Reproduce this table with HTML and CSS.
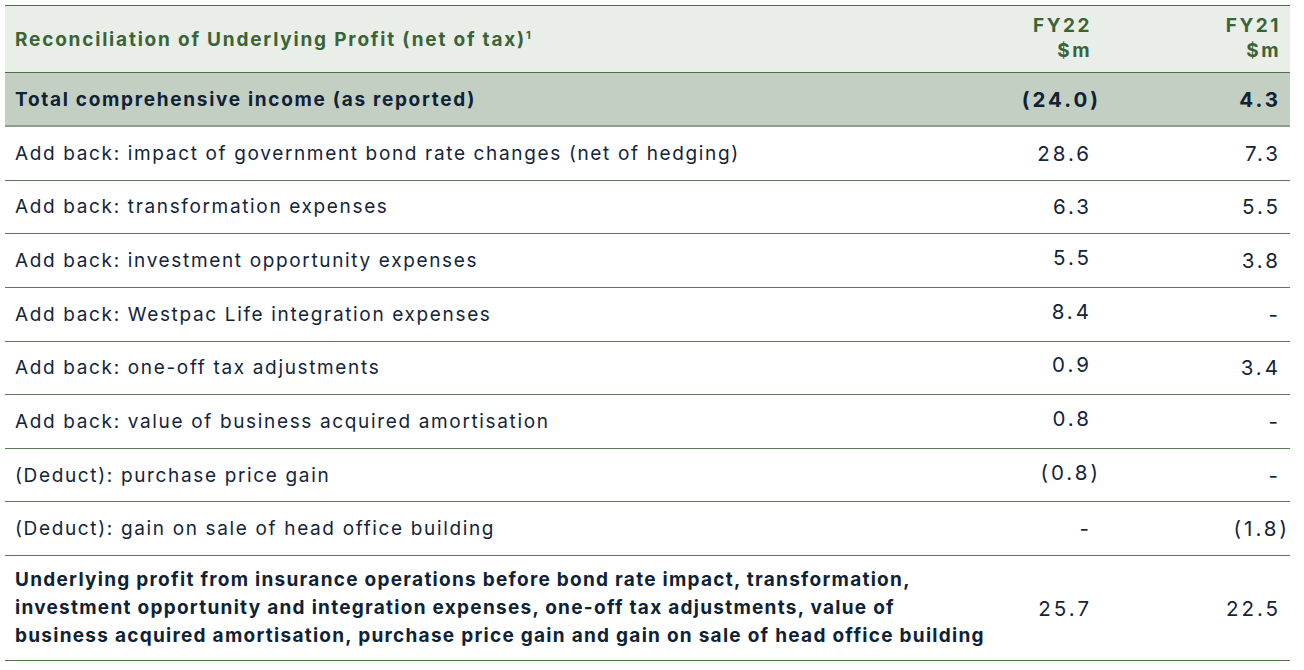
FILE: index.html
```html
<!DOCTYPE html>
<html lang="en">
<head>
<meta charset="utf-8">
<title>Reconciliation of Underlying Profit</title>
<link rel="stylesheet" href="styles.css">
</head>
<body>
<div class="table">
  <div class="row head">
    <div class="label">Reconciliation of Underlying Profit (net of tax)<sup>1</sup></div>
    <div class="num fy22">FY22<br>$m</div>
    <div class="num fy21">FY21<br>$m</div>
  </div>
  <div class="row total">
    <div class="label">Total comprehensive income (as reported)</div>
    <div class="num fy22">(24.0<span class="cp">)</span></div>
    <div class="num fy21">4.3</div>
  </div>
  <div class="row">
    <div class="label">Add back: impact of government bond rate changes (net of hedging)</div>
    <div class="num fy22">28.6</div>
    <div class="num fy21">7.3</div>
  </div>
  <div class="row">
    <div class="label">Add back: transformation expenses</div>
    <div class="num fy22">6.3</div>
    <div class="num fy21">5.5</div>
  </div>
  <div class="row">
    <div class="label">Add back: investment opportunity expenses</div>
    <div class="num fy22 up">5.5</div>
    <div class="num fy21">3.8</div>
  </div>
  <div class="row">
    <div class="label">Add back: Westpac Life integration expenses</div>
    <div class="num fy22 up">8.4</div>
    <div class="num fy21">-</div>
  </div>
  <div class="row">
    <div class="label">Add back: one-off tax adjustments</div>
    <div class="num fy22 up">0.9</div>
    <div class="num fy21">3.4</div>
  </div>
  <div class="row">
    <div class="label">Add back: value of business acquired amortisation</div>
    <div class="num fy22 up">0.8</div>
    <div class="num fy21">-</div>
  </div>
  <div class="row">
    <div class="label">(Deduct): purchase price gain</div>
    <div class="num fy22 up">(0.8<span class="cp">)</span></div>
    <div class="num fy21">-</div>
  </div>
  <div class="row">
    <div class="label">(Deduct): gain on sale of head office building</div>
    <div class="num fy22">-</div>
    <div class="num fy21">(1.8<span class="cp">)</span></div>
  </div>
  <div class="row last">
    <div class="label">Underlying profit from insurance operations before bond rate impact, transformation,<br>investment opportunity and integration expenses, one-off tax adjustments, value of<br>business acquired amortisation, purchase price gain and gain on sale of head office building</div>
    <div class="num fy22">25.7</div>
    <div class="num fy21">22.5</div>
  </div>
</div>
</body>
</html>
```

FILE: styles.css
```css
html, body {
  margin: 0;
  padding: 0;
  background: #ffffff;
}

body {
  padding: 5px 14px 0 5px;
  font-family: "Inter", "DejaVu Sans", sans-serif;
  font-size: 19px;
  color: #13253a;
}

.table {
  border-top: 1px solid #4d6f48;
}

.row {
  display: grid;
  grid-template-columns: minmax(0, 1fr) 150px 191px;
  align-items: center;
  height: 53.625px;
  box-sizing: border-box;
  border-bottom: 1px solid #5b7b56;
}

.label {
  padding-left: 10px;
  white-space: nowrap;
  letter-spacing: 1.65px;
}

.num {
  text-align: right;
  font-size: 20.5px;
  letter-spacing: 3px;
  margin-right: -3px;
}

.fy22 {
  padding-right: 10px;
}

.fy21 {
  padding-right: 12px;
}

.up {
  padding-bottom: 6px;
}

.cp {
  margin-right: -9px;
}

.head {
  height: 67px;
  background: #e9eee9;
  color: #3b6337;
  font-weight: 700;
  border-bottom: 1px solid #4d6f48;
}

.head .label {
  letter-spacing: 1.8px;
}

.head .num {
  font-size: 19px;
  line-height: 25px;
  padding-bottom: 2px;
  letter-spacing: 2.5px;
}

.head sup {
  font-size: 11px;
  vertical-align: 7px;
  line-height: 0;
  margin-left: 0;
  letter-spacing: 0;
}

.total {
  height: 54px;
  background: #c3cfc3;
  font-weight: 700;
  border-bottom: 2px solid #8ea08c;
  color: #0f2236;
}

.total .label {
  letter-spacing: 1.7px;
}

.last {
  height: 105px;
  border-bottom: 1px solid #4f7249;
}

.last .label {
  font-weight: 700;
  line-height: 28px;
  color: #0f2236;
  letter-spacing: 1.27px;
}
```
